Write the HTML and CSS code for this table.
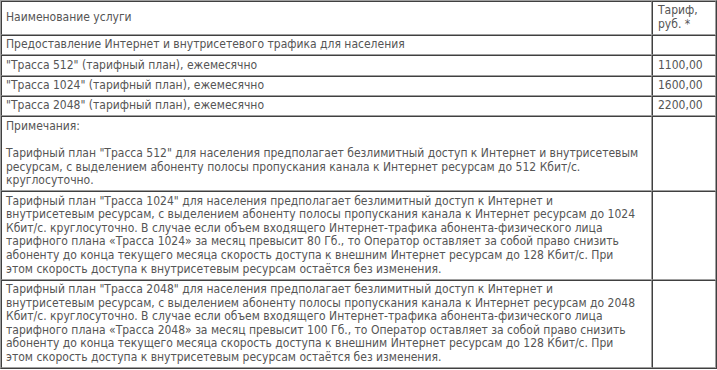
FILE: index.html
```
<!DOCTYPE html>
<html lang="ru">
<head>
<meta charset="utf-8">
<title>Тарифы</title>
<link rel="stylesheet" href="styles.css">
</head>
<body>
<table class="tariffs">
  <colgroup>
    <col class="col-name">
    <col class="col-price">
  </colgroup>
  <tr>
    <td class="head-name">Наименование услуги</td>
    <td class="head-price">Тариф,<br>руб. *</td>
  </tr>
  <tr>
    <td>Предоставление Интернет и внутрисетевого трафика для населения</td>
    <td></td>
  </tr>
  <tr>
    <td>"Трасса 512" (тарифный план), ежемесячно</td>
    <td class="price">1100,00</td>
  </tr>
  <tr>
    <td>"Трасса 1024" (тарифный план), ежемесячно</td>
    <td class="price">1600,00</td>
  </tr>
  <tr>
    <td>"Трасса 2048" (тарифный план), ежемесячно</td>
    <td class="price">2200,00</td>
  </tr>
  <tr>
    <td class="note">Примечания:<br><br>Тарифный план "Трасса 512" для населения предполагает безлимитный доступ к Интернет и внутрисетевым<br>ресурсам, с выделением абоненту полосы пропускания канала к Интернет ресурсам до 512 Кбит/с.<br>круглосуточно.</td>
    <td></td>
  </tr>
  <tr>
    <td class="note">Тарифный план "Трасса 1024" для населения предполагает безлимитный доступ к Интернет и<br>внутрисетевым ресурсам, с выделением абоненту полосы пропускания канала к Интернет ресурсам до 1024<br>Кбит/с. круглосуточно. В случае если объем входящего Интернет-трафика абонента-физического лица<br>тарифного плана «Трасса 1024» за месяц превысит 80 Гб., то Оператор оставляет за собой право снизить<br>абоненту до конца текущего месяца скорость доступа к внешним Интернет ресурсам до 128 Кбит/с. При<br>этом скорость доступа к внутрисетевым ресурсам остаётся без изменения.</td>
    <td></td>
  </tr>
  <tr>
    <td class="note">Тарифный план "Трасса 2048" для населения предполагает безлимитный доступ к Интернет и<br>внутрисетевым ресурсам, с выделением абоненту полосы пропускания канала к Интернет ресурсам до 2048<br>Кбит/с. круглосуточно. В случае если объем входящего Интернет-трафика абонента-физического лица<br>тарифного плана «Трасса 2048» за месяц превысит 100 Гб., то Оператор оставляет за собой право снизить<br>абоненту до конца текущего месяца скорость доступа к внешним Интернет ресурсам до 128 Кбит/с. При<br>этом скорость доступа к внутрисетевым ресурсам остаётся без изменения.</td>
    <td></td>
  </tr>
</table>
</body>
</html>
```
FILE: styles.css
```
html, body {
  margin: 0;
  padding: 0;
  background: #ffffff;
}

.tariffs {
  width: 717px;
  table-layout: fixed;
  border-collapse: separate;
  border-spacing: 0;
  border: 1px solid;
  border-color: #a0a0a0 #404040 #404040 #a0a0a0;
  font-family: "DejaVu Sans Condensed", "DejaVu Sans", sans-serif;
  font-size: 12px;
  line-height: 13.6px;
  color: #555555;
}

.col-price {
  width: 64px;
}

.tariffs td {
  border: 1px solid;
  border-color: #404040 #a0a0a0 #a0a0a0 #404040;
  padding: 2.4px 4px 2.4px 4px;
  vertical-align: top;
  text-align: left;
}

.tariffs td.head-name {
  vertical-align: middle;
}

.tariffs td.head-price,
.tariffs td.price {
  padding-left: 5px;
}

.tariffs td.note {
  white-space: nowrap;
  overflow: hidden;
}
```
